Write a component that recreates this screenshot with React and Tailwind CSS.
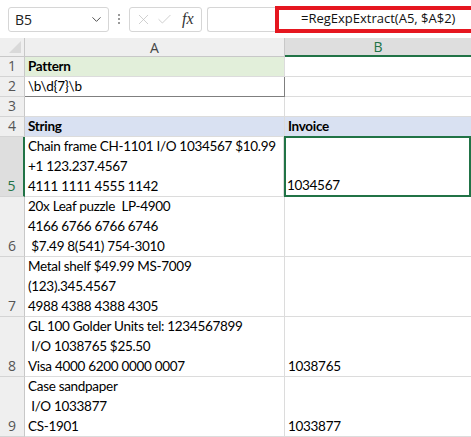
import { ChevronDown, X, Check } from 'lucide-react'

const ROWS = [
    { n: '1', h: 'h-[20px]', a: ['Pattern'], b: [], bold: true, bg: 'bg-[#e2efda]', bBg: '' },
    { n: '2', h: 'h-[20px]', a: ['\\b\\d{7}\\b'], b: [], boxed: true },
    { n: '3', h: 'h-[20px]', a: [], b: [] },
    { n: '4', h: 'h-[20px]', a: ['String'], b: ['Invoice'], bold: true, bg: 'bg-[#d9e1f2]', bBg: 'bg-[#d9e1f2]' },
    { n: '5', h: 'h-[60px]', a: ['Chain frame CH-1101 I/O 1034567 $10.99', '+1 123.237.4567', '4111 1111 4555 1142'], b: ['1034567'], selected: true },
    { n: '6', h: 'h-[60px]', a: ['20x Leaf puzzle  LP-4900', '4166 6766 6766 6746', ' $7.49 8(541) 754-3010'], b: [] },
    { n: '7', h: 'h-[60px]', a: ['Metal shelf $49.99 MS-7009', '(123).345.4567', '4988 4388 4388 4305'], b: [] },
    { n: '8', h: 'h-[60px]', a: ['GL 100 Golder Units tel: 1234567899', ' I/O 1038765 $25.50', 'Visa 4000 6200 0000 0007'], b: ['1038765'] },
    { n: '9', h: 'h-[60px]', a: ['Case sandpaper', ' I/O 1033877', 'CS-1901'], b: ['1033877'] },
]

function Toolbar() {
    return (
        <div className="flex items-center h-[38px] bg-white pl-2 pr-0 shrink-0">
            {/* Name box */}
            <div className="flex items-center justify-between w-[101px] h-[25px] rounded-[3px] border border-[#d6d6d6] pl-[6px] pr-[4px] shrink-0">
                <span className="text-[14px] text-[#222]" style={{ fontFamily: '"Open Sans", sans-serif' }}>B5</span>
                <ChevronDown size={15} strokeWidth={1.5} className="text-[#444]" />
            </div>
            {/* dots */}
            <div className="flex flex-col gap-[2px] mx-[9px] items-center shrink-0">
                <div className="w-[2px] h-[2px] bg-[#9a9a9a]" />
                <div className="w-[2px] h-[2px] bg-[#9a9a9a]" />
                <div className="w-[2px] h-[2px] bg-[#9a9a9a]" />
            </div>
            {/* fx box */}
            <div className="flex items-center w-[73px] h-[25px] rounded-[3px] border border-[#d6d6d6] pl-[5px] gap-[4px] shrink-0">
                <X size={17} strokeWidth={1} className="text-[#bdbdbd]" />
                <Check size={17} strokeWidth={1} className="text-[#bdbdbd]" />
                <span className="ml-[5px] text-[16px] italic text-[#333] leading-none" style={{ fontFamily: '"Liberation Serif", serif' }}>fx</span>
            </div>
            {/* formula input */}
            <div className="flex items-center w-[263px] h-[25px] ml-[5px] rounded-l-[3px] border border-[#d6d6d6] border-r-0 shrink-0">
                <div className="ml-[67px] w-[196px] h-[27px] border-[4px] border-r-0 border-[#e5161f] flex items-center pl-[22px] shrink-0">
                    <span className="text-[13px] text-[#111] whitespace-nowrap" style={{ fontFamily: '"Open Sans", sans-serif' }}>=RegExpExtract(A5, $A$2)</span>
                </div>
            </div>
        </div>
    )
}

function HeaderRow() {
    return (
        <div className="flex h-[19px] shrink-0 bg-[#efefef] text-[14px]" style={{ fontFamily: '"Open Sans", sans-serif' }}>
            <div className="w-[25px] border-r border-b border-[#c8c8c8] flex items-end justify-end pr-[3px] pb-[3px]">
                <div className="w-0 h-0 border-l-[12px] border-l-transparent border-b-[12px] border-b-[#d9d9d9]" />
            </div>
            <div className="w-[260px] border-r border-b border-[#c8c8c8] flex items-center justify-center text-[#444]">A</div>
            <div className="flex-1 bg-[#dedede] border-b-2 border-[#217346] flex items-center justify-center text-[#217346]">B</div>
        </div>
    )
}

function Lines({ items, bold }) {
    return items.map((t, i) => (
        <div key={i} className={`h-[20px] leading-[20px] whitespace-pre ${bold ? 'font-bold' : ''}`}>{t}</div>
    ))
}

export default function App() {
    return (
        <div className="w-[471px] h-[437px] overflow-hidden bg-white flex flex-col">
            <Toolbar />
            <HeaderRow />
            <div className="flex flex-col text-[13.5px] tracking-[-0.3px] text-black" style={{ fontFamily: 'Lato, sans-serif' }}>
                {ROWS.map((r) => (
                    <div key={r.n} className={`flex ${r.h} shrink-0`}>
                        <div
                            className={`w-[25px] flex items-end justify-center pb-[1px] leading-[19px] text-[14px] tracking-normal border-b border-[#d4d4d4] ${r.selected ? 'bg-[#dedede] text-[#217346] border-r-2 border-r-[#217346]' : 'bg-[#efefef] text-[#555] border-r border-r-[#c8c8c8]'}`}
                            style={{ fontFamily: '"Open Sans", sans-serif' }}
                        >
                            {r.n}
                        </div>
                        <div
                            className={`${r.selected ? 'w-[259px]' : 'w-[260px]'} flex flex-col justify-end pl-[3px] ${r.bg || ''} ${r.boxed ? 'border-b border-r border-[#7f7f7f]' : 'border-b border-r border-[#dcdcdc]'}`}
                        >
                            <Lines items={r.a} bold={r.bold} />
                        </div>
                        {r.selected ? (
                            <div className="flex-1 flex flex-col justify-end pl-[1px] -mt-[1px] h-[61px] border-2 border-[#217346]">
                                <Lines items={r.b} />
                            </div>
                        ) : (
                            <div className={`flex-1 flex flex-col justify-end pl-[3px] border-b border-[#dcdcdc] ${r.bBg || ''}`}>
                                <Lines items={r.b} bold={r.bold} />
                            </div>
                        )}
                    </div>
                ))}
            </div>
        </div>
    )
}
